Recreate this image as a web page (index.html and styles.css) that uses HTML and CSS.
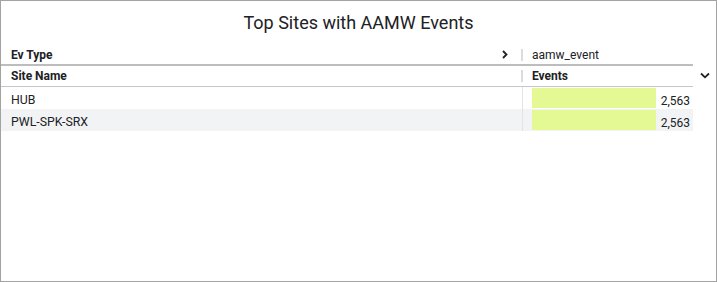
FILE: index.html
```html
<!DOCTYPE html>
<html lang="en">
<head>
  <meta charset="UTF-8" />
  <title>Top Sites with AAMW Events</title>
  <link rel="stylesheet" href="styles.css">
</head>
<body>
  <div class="chart">
    <h1 class="chart-title">Top Sites with AAMW Events</h1>

    <div class="table-wrap">
      <div class="table">
        <div class="row head head-pivot">
          <div class="cell dim">
            <span>Ev Type</span>
            <svg class="chev" width="6" height="9" viewBox="0 0 6 9">
              <path d="M1 1l3.5 3.5L1 8" fill="none" stroke="#202124" stroke-width="1.8"/>
            </svg>
          </div>
          <div class="cell metric sep">aamw_event</div>
        </div>

        <div class="row head head-cols">
          <div class="cell dim"><span>Site Name</span></div>
          <div class="cell metric sep">Events</div>
        </div>

        <div class="row">
          <div class="cell dim">HUB</div>
          <div class="cell metric body-metric">
            <div class="bar-track"><div class="bar" style="width: 100%"></div></div>
            <span class="value">2,563</span>
          </div>
        </div>

        <div class="row striped">
          <div class="cell dim">PWL-SPK-SRX</div>
          <div class="cell metric body-metric">
            <div class="bar-track"><div class="bar" style="width: 100%"></div></div>
            <span class="value">2,563</span>
          </div>
        </div>
      </div>

      <div class="side">
        <svg class="sort" width="10" height="7" viewBox="0 0 10 7">
          <path d="M1 1.5l4 3.8 4-3.8" fill="none" stroke="#202124" stroke-width="1.8"/>
        </svg>
      </div>
    </div>
  </div>
</body>
</html>
```

FILE: styles.css
```css
* {
  margin: 0;
  padding: 0;
  box-sizing: border-box;
  font-family: Roboto, 'Liberation Sans', sans-serif;
}

body {
  background: #fff;
  color: #202124;
}

.chart {
  width: 717px;
  height: 282px;
  border: 1px solid #a3a3a3;
  background: #fff;
}

.chart-title {
  font-size: 18px;
  font-weight: 400;
  line-height: 21px;
  text-align: center;
  color: #202124;
  padding-top: 11px;
  height: 43px;
}

.table-wrap {
  display: flex;
}

.table {
  width: 692px;
  font-size: 12px;
}

.row {
  display: grid;
  grid-template-columns: 520px 172px;
  height: 22px;
}

.head {
  height: 21px;
  font-weight: 700;
  border-bottom: 1px solid #c6c6c6;
}

.head-pivot {
  height: 22px;
  border-bottom: 2px solid #bdbdbd;
}

.head-pivot .metric {
  font-weight: 400;
}

.cell {
  display: flex;
  align-items: center;
  line-height: 14px;
}

.dim {
  padding-left: 10px;
  padding-right: 13px;
  justify-content: space-between;
}

.head-pivot .cell {
  padding-top: 1px;
}

.sep::before {
  content: "";
  width: 2px;
  height: 12px;
  background: #dadce0;
  margin-right: 9px;
}

.row .cell.dim:not(:has(span)) {
  padding-top: 3px;
  font-size: 12.3px;
}

.body-metric {
  align-items: flex-end;
  border-left: 1px solid #e3e3e3;
  margin-left: 1px;
  padding-left: 9px;
  padding-bottom: 1px;
}

.bar-track {
  width: 124px;
  height: 20px;
}

.bar {
  height: 100%;
  background: #e4f994;
}

.value {
  margin-left: auto;
  padding-right: 3px;
}

.striped {
  background: #f1f3f4;
}

.side {
  width: 23px;
  padding-top: 28px;
  padding-left: 7px;
}

.chev,
.sort {
  display: block;
}
```
